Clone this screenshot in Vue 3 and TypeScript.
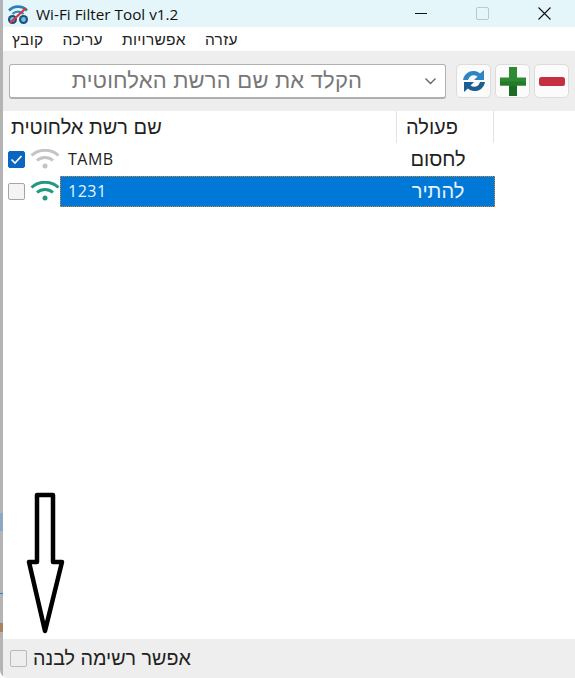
<script setup lang="ts">
import { ref } from "vue";

interface INetwork {
  name: string;
  action: string;
  checked: boolean;
  connected: boolean;
  selected: boolean;
}

const networks = ref<INetwork[]>([
  { name: "TAMB", action: "לחסום", checked: true, connected: false, selected: false },
  { name: "1231", action: "להתיר", checked: false, connected: true, selected: true },
]);

const menu = ["קובץ", "עריכה", "אפשרויות", "עזרה"];
</script>

<template>
  <div class="window">
    <div class="edge"></div>

    <div class="titlebar">
      <svg class="app-icon" width="24" height="22" viewBox="0 0 24 22">
        <path d="M3 7.500a12.500 12.500 0 0 1 18 0" fill="none" stroke="#2f7fb5" stroke-width="2.600" />
        <path d="M6.500 11a7.500 7.500 0 0 1 11 0" fill="none" stroke="#2f8fc0" stroke-width="2.400" />
        <circle cx="6.500" cy="16.500" r="4.500" fill="#1e4f78" />
        <circle cx="17.500" cy="16.500" r="4.500" fill="#1e4f78" />
        <circle cx="6.500" cy="16.500" r="2.400" fill="#6ec3ea" />
        <circle cx="17.500" cy="16.500" r="2.400" fill="#6ec3ea" />
        <path d="M4 20 20 5" stroke="#d8343c" stroke-width="2.200" />
      </svg>
      <span class="title">Wi-Fi Filter Tool v1.2</span>
      <div class="win-buttons">
        <span class="win-min"></span>
        <span class="win-max"></span>
        <svg width="13" height="13" viewBox="0 0 13 13">
          <path d="M.5.5l12 12M12.500.5l-12 12" stroke="#111" stroke-width="1.100" />
        </svg>
      </div>
    </div>

    <div class="menubar">
      <span v-for="item in menu" :key="item">{{ item }}</span>
    </div>

    <div class="toolbar">
      <div class="combo">
        <span class="combo-text">הקלד את שם הרשת האלחוטית</span>
        <svg width="13" height="8" viewBox="0 0 13 8">
          <path d="M1.500 1.500 6.500 6.500 11.500 1.500" fill="none" stroke="#666" stroke-width="1.400" />
        </svg>
      </div>
      <button class="tool-btn">
        <svg width="26" height="24" viewBox="0 0 26 24">
          <path d="M2 11C3 5 8 1.500 13 2c2.500.2 4.500 1.200 6 2.500L23 1v10h-10l3.500-3.500C13 5 8.500 6 7 11z" fill="#2c86c6" />
          <path d="M24 13c-1 6-6 9.500-11 9-2.500-.2-4.500-1.200-6-2.500L3 23V13h10l-3.500 3.500C13 19 17.500 18 19 13z" fill="#1c5e8f" />
        </svg>
      </button>
      <button class="tool-btn">
        <svg width="26" height="29" viewBox="0 0 26 29">
          <path d="M9 0h8v10.500h9v8h-9V29H9V18.500H0v-8h9z" fill="#2e8b34" />
          <path d="M9 18.500h8V29H9z" fill="#1d6a24" />
          <path d="M0 14.500h26v4H0z" fill="#237a2b" />
        </svg>
      </button>
      <button class="tool-btn">
        <svg width="26" height="9" viewBox="0 0 26 9">
          <rect width="26" height="9" rx="2.500" fill="#c62f40" />
        </svg>
      </button>
    </div>

    <div class="list">
      <div class="list-head">
        <div class="head-name">שם רשת אלחוטית</div>
        <div class="head-action">פעולה</div>
      </div>
      <div v-for="net in networks" :key="net.name" class="row">
        <span class="check" :class="{ on: net.checked }">
          <svg v-if="net.checked" width="13" height="11" viewBox="0 0 13 11">
            <path d="M1.500 5.500l3.500 3.500 6.500-7" fill="none" stroke="#fff" stroke-width="1.600" />
          </svg>
        </span>
        <svg class="wifi" width="30" height="20" viewBox="0 0 30 20" :class="{ live: net.connected }">
          <path d="M1.500 6.500C9 -.5 21 -.5 28.500 6.500" />
          <path d="M7 11.500c4.500-4 11.500-4 16 0" />
          <circle cx="15" cy="17" r="2.500" />
        </svg>
        <div class="cells" :class="{ selected: net.selected }">
          <div class="cell-name">{{ net.name }}</div>
          <div class="cell-action">{{ net.action }}</div>
        </div>
      </div>
    </div>

    <svg class="big-arrow" width="44" height="146" viewBox="0 0 44 146">
      <path
        d="M12 4H28V71H37L20 140 4 71H12Z"
        fill="#fff"
        stroke="#000"
        stroke-width="4.500"
        stroke-linejoin="round"
      />
    </svg>

    <div class="footer">
      <span class="check off"></span>
      <span>אפשר רשימה לבנה</span>
    </div>
  </div>
</template>

<style scoped>
.window {
  position: relative;
  width: 575px;
  height: 678px;
  display: flex;
  flex-direction: column;
  background: #fff;
  padding-left: 3px;
  border-bottom-left-radius: 8px;
  box-sizing: border-box;
  font-family: "Liberation Sans", "Noto Sans", sans-serif;
  color: #222;
  overflow: hidden;
}

/* sliver of the desktop showing beside the window */
.edge {
  position: absolute;
  left: 0;
  top: 0;
  bottom: 0;
  width: 3px;
  background: linear-gradient(
    to bottom,
    #b4b4b4 513px,
    #8aa9c4 513px,
    #8aa9c4 531px,
    #b4b4b4 531px,
    #b4b4b4 593px,
    #2f7fd0 593px,
    #2f7fd0 594px,
    #b4b4b4 594px,
    #b4b4b4 623px,
    #a8825a 623px,
    #a8825a 632px,
    #b4b4b4 632px
  );
}

.titlebar {
  height: 27px;
  flex: none;
  display: flex;
  align-items: center;
  background: #e4f6fa;
  padding-left: 3px;
}

.app-icon {
  margin-right: 6px;
}

.title {
  font-family: "Open Sans", "Liberation Sans", sans-serif;
  font-size: 15.3px;
  color: #111;
}

.win-buttons {
  margin-left: auto;
  display: flex;
  align-items: center;
  padding-right: 24px;
}

.win-min {
  width: 12px;
  height: 1px;
  background: #111;
  margin-right: 49px;
}

.win-max {
  width: 11px;
  height: 11px;
  border: 1px solid #b9c9cc;
  border-radius: 2px;
  margin-right: 49px;
}

.menubar {
  height: 24px;
  flex: none;
  box-sizing: border-box;
  display: flex;
  align-items: center;
  gap: 19px;
  padding: 2px 0 0 9px;
  font-size: 15.5px;
  letter-spacing: 0.3px;
}

.toolbar {
  height: 60px;
  flex: none;
  display: flex;
  align-items: center;
  background: #eeeeee;
  padding-left: 6px;
}

.combo {
  width: 437px;
  height: 35px;
  margin-right: 10px;
  box-sizing: border-box;
  display: flex;
  align-items: center;
  background: #fff;
  border: 1px solid #b0b0b0;
  border-bottom-width: 2px;
  border-radius: 3px;
  padding-right: 8px;
}

.combo-text {
  flex: 1;
  text-align: center;
  font-size: 22px;
  letter-spacing: 0.2px;
  color: #777;
  direction: rtl;
}

.tool-btn {
  width: 35px;
  height: 34px;
  margin-right: 4px;
  padding: 0;
  display: flex;
  align-items: center;
  justify-content: center;
  background: #fbfbfb;
  border: 1px solid #dcdcdc;
  border-radius: 5px;
}

.list {
  flex: 1;
  background: #fff;
}

.list-head {
  display: flex;
  height: 32px;
}

.head-name {
  width: 394px;
  box-sizing: border-box;
  padding-left: 8px;
  font-size: 20px;
  line-height: 32px;
  border-right: 1px solid #e3e3e3;
}

.head-action {
  width: 97px;
  font-size: 20px;
  line-height: 32px;
  text-align: center;
  box-sizing: border-box;
  padding-right: 26px;
  border-right: 1px solid #e3e3e3;
}

.row {
  display: flex;
  align-items: center;
  height: 32px;
  padding-left: 5px;
}

.check {
  width: 17px;
  height: 17px;
  box-sizing: border-box;
  flex: none;
  display: inline-flex;
  align-items: center;
  justify-content: center;
  background: #f4f4f4;
  border: 1px solid #a5a5a5;
  border-radius: 2px;
}

.check.on {
  background: #0a66c0;
  border-color: #0a66c0;
}

.check.off {
  background: #eeeeee;
  border-color: #bbb;
}

.wifi {
  margin-left: 5px;
  flex: none;
  fill: none;
  stroke: #c4c4c4;
  stroke-width: 3;
}

.wifi circle {
  fill: #c4c4c4;
  stroke: none;
}

.wifi.live {
  stroke: #1f9a80;
}

.wifi.live circle {
  fill: #1f9a80;
}

.cells {
  width: 435px;
  height: 31px;
  flex: none;
  display: flex;
  align-items: center;
}

.cells.selected {
  background: #0078d7;
  color: #e9f3fb;
  outline: 1px dotted #d98a2c;
  outline-offset: -1px;
}

.cell-name {
  width: 338px;
  padding-left: 8px;
  box-sizing: border-box;
  font-family: "Open Sans", "Liberation Sans", sans-serif;
  font-size: 16px;
  letter-spacing: 0.5px;
}

.cell-action {
  width: 97px;
  text-align: center;
  font-size: 20px;
  box-sizing: border-box;
  padding-right: 17px;
}

.big-arrow {
  position: absolute;
  left: 25px;
  top: 491px;
}

.footer {
  height: 39px;
  flex: none;
  display: flex;
  align-items: center;
  gap: 6px;
  background: #eeeeee;
  padding-left: 7px;
  font-size: 19.7px;
}
</style>
